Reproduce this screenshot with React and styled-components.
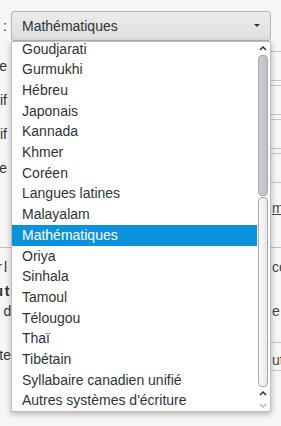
import React from 'react';
import styled, { createGlobalStyle } from 'styled-components';

const Global = createGlobalStyle`
  html, body { margin: 0; padding: 0; background: #f6f6f5; }
  body {
    font-family: "Liberation Sans", Arial, sans-serif;
    font-size: 14px;
    color: #2e3436;
    overflow: hidden;
  }
`;

const Page = styled.div`
  position: relative;
  width: 281px;
  height: 426px;
  overflow: hidden;
  box-sizing: border-box;
  padding-top: 11px;
  display: flex;
  flex-direction: column;
`;

const Row = styled.div`
  display: flex;
  flex: none;
  height: ${p => p.$h}px;
  margin-top: ${p => p.$mt || 0}px;
`;

const LeftCell = styled.div`
  width: 11px;
  flex: none;
  box-sizing: border-box;
  display: flex;
  justify-content: ${p => (p.$start ? 'flex-start' : 'flex-end')};
  align-items: ${p => (p.$top ? 'flex-start' : 'center')};
  overflow: hidden;
  white-space: nowrap;
  padding-right: ${p => p.$pr || 0}px;
  padding-left: ${p => p.$pl || 0}px;
  padding-top: ${p => p.$pt || 0}px;
  font-weight: ${p => (p.$bold ? 700 : 400)};
  word-spacing: ${p => (p.$tight ? '-2px' : 'normal')};
  color: #333;
`;

const MiddleCell = styled.div`
  width: 260px;
  flex: none;
  display: flex;
`;

const RightCell = styled.div`
  flex: 1;
  min-width: 0;
  overflow: hidden;
  white-space: nowrap;
  display: flex;
  align-items: ${p => (p.$top ? 'flex-start' : 'center')};
  padding-left: 1px;
  color: #3b4652;
`;

const FieldEdge = styled.div`
  flex: 1;
  box-sizing: border-box;
  height: 100%;
  border-top: 1px solid #c6c6c6;
  border-bottom: 1px solid #c6c6c6;
  padding-top: ${p => p.$pt || 0}px;
  margin-left: -1px;
  padding-left: 1px;
`;

const AccessKey = styled.span`
  text-decoration: underline;
`;

const Separator = styled.div`
  flex: none;
  height: 1px;
  margin-top: ${p => p.$mt}px;
  background: #c2c2c2;
`;

const SelectBox = styled.div`
  flex: 1;
  box-sizing: border-box;
  border: 1px solid #b4b4b4;
  border-radius: 3px;
  background: linear-gradient(#ececec, #dedede);
  display: flex;
  align-items: center;
  justify-content: space-between;
  padding: 0 10px 0 10px;
  color: #2e3436;
  font-size: 14px;
`;

const Caret = styled.span`
  width: 0;
  height: 0;
  border-left: 3.5px solid transparent;
  border-right: 3.5px solid transparent;
  border-top: 3.5px solid #2e3436;
  margin-top: -1px;
`;

const Popup = styled.div`
  position: absolute;
  left: 11px;
  top: 41px;
  width: 260px;
  height: 371px;
  box-sizing: border-box;
  background: #fff;
  border: 1px solid #bdbdbd;
  box-shadow: 0 2px 6px rgba(0, 0, 0, 0.28);
  display: flex;
`;

const List = styled.div`
  flex: 1;
  min-width: 0;
  display: flex;
  flex-direction: column;
  justify-content: flex-end;
  overflow: hidden;
`;

const Item = styled.div`
  flex: none;
  height: 20.7px;
  line-height: 20.7px;
  padding-left: 10px;
  white-space: nowrap;
  color: ${p => (p.$active ? '#fff' : '#2e3436')};
  background: ${p => (p.$active ? '#0a93da' : 'transparent')};
`;

const ScrollCol = styled.div`
  width: 13px;
  flex: none;
  display: flex;
  flex-direction: column;
`;

const Stepper = styled.div`
  flex: none;
  height: ${p => p.$h}px;
  display: flex;
  align-items: center;
  justify-content: center;
  padding-right: 1px;
`;

const Trough = styled.div`
  flex: none;
  height: 332px;
  display: flex;
  flex-direction: column;
  gap: 1px;
  padding: 0 2px 0 1px;
`;

const TroughFill = styled.div`
  flex: 1;
  box-sizing: border-box;
  border: 1px solid #a4a8ac;
  border-radius: 4px;
  background: linear-gradient(to right, #c9cdd1, #bcc1c5);
`;

const Thumb = styled.div`
  flex: none;
  height: 190px;
  box-sizing: border-box;
  border: 1px solid #a6aaae;
  border-radius: 4px;
  background: linear-gradient(to right, #fbfbfb, #e6e8ea);
`;

const Chevron = ({ down, color }) => (
  <svg width="8" height="5" viewBox="0 0 8 5">
    <polyline
      points={down ? '1,1 4,4 7,1' : '1,4 4,1 7,4'}
      fill="none"
      stroke={color}
      strokeWidth="1.5"
    />
  </svg>
);

const scripts = [
  'Goudjarati',
  'Gurmukhi',
  'Hébreu',
  'Japonais',
  'Kannada',
  'Khmer',
  'Coréen',
  'Langues latines',
  'Malayalam',
  'Mathématiques',
  'Oriya',
  'Sinhala',
  'Tamoul',
  'Télougou',
  'Thaï',
  'Tibétain',
  'Syllabaire canadien unifié',
  "Autres systèmes d'écriture",
];

const fontRows = ['Proportionnelle', 'Serif', 'Sans serif', 'Monospace'];

export default function App() {
  return (
    <>
      <Global />
      <Page>
        <Row $h={30}>
          <LeftCell $pr={4}>Polices pour :</LeftCell>
          <MiddleCell>
            <SelectBox>
              <span>Mathématiques</span>
              <Caret />
            </SelectBox>
          </MiddleCell>
          <RightCell />
        </Row>

        {fontRows.map((label, i) => (
          <Row key={label} $h={30} $mt={i === 0 ? 10 : 4}>
            <LeftCell $pr={4}>{label}</LeftCell>
            <MiddleCell />
            <RightCell>
              <FieldEdge />
            </RightCell>
          </Row>
        ))}

        <Row $h={30} $mt={10}>
          <LeftCell />
          <MiddleCell />
          <RightCell>
            <AccessKey>m</AccessKey>
          </RightCell>
        </Row>

        <Separator $mt={24} />

        <Row $h={20} $mt={9}>
          <LeftCell $pr={4} $tight>Autoriser l</LeftCell>
          <MiddleCell />
          <RightCell>ce</RightCell>
        </Row>
        <Row $h={20} $mt={4}>
          <LeftCell $pr={1.5} $bold $tight>Encodage du t</LeftCell>
          <MiddleCell />
          <RightCell />
        </Row>
        <Row $h={20}>
          <LeftCell $start $pl={3.5}>d</LeftCell>
          <MiddleCell />
          <RightCell>e</RightCell>
        </Row>
        <Row $h={29} $mt={21}>
          <LeftCell $top $pt={5}>texte</LeftCell>
          <MiddleCell />
          <RightCell $top>
            <FieldEdge $pt={9}>ut</FieldEdge>
          </RightCell>
        </Row>

        <Popup>
          <List>
            {scripts.map(s => (
              <Item key={s} $active={s === 'Mathématiques'}>
                {s}
              </Item>
            ))}
          </List>
          <ScrollCol>
            <Stepper $h={13}>
              <Chevron color="#2e3436" />
            </Stepper>
            <Trough>
              <TroughFill />
              <Thumb />
            </Trough>
            <Stepper $h={12}>
              <Chevron color="#2e3436" />
            </Stepper>
            <Stepper $h={12}>
              <Chevron down color="#b8bcbf" />
            </Stepper>
          </ScrollCol>
        </Popup>
      </Page>
    </>
  );
}
